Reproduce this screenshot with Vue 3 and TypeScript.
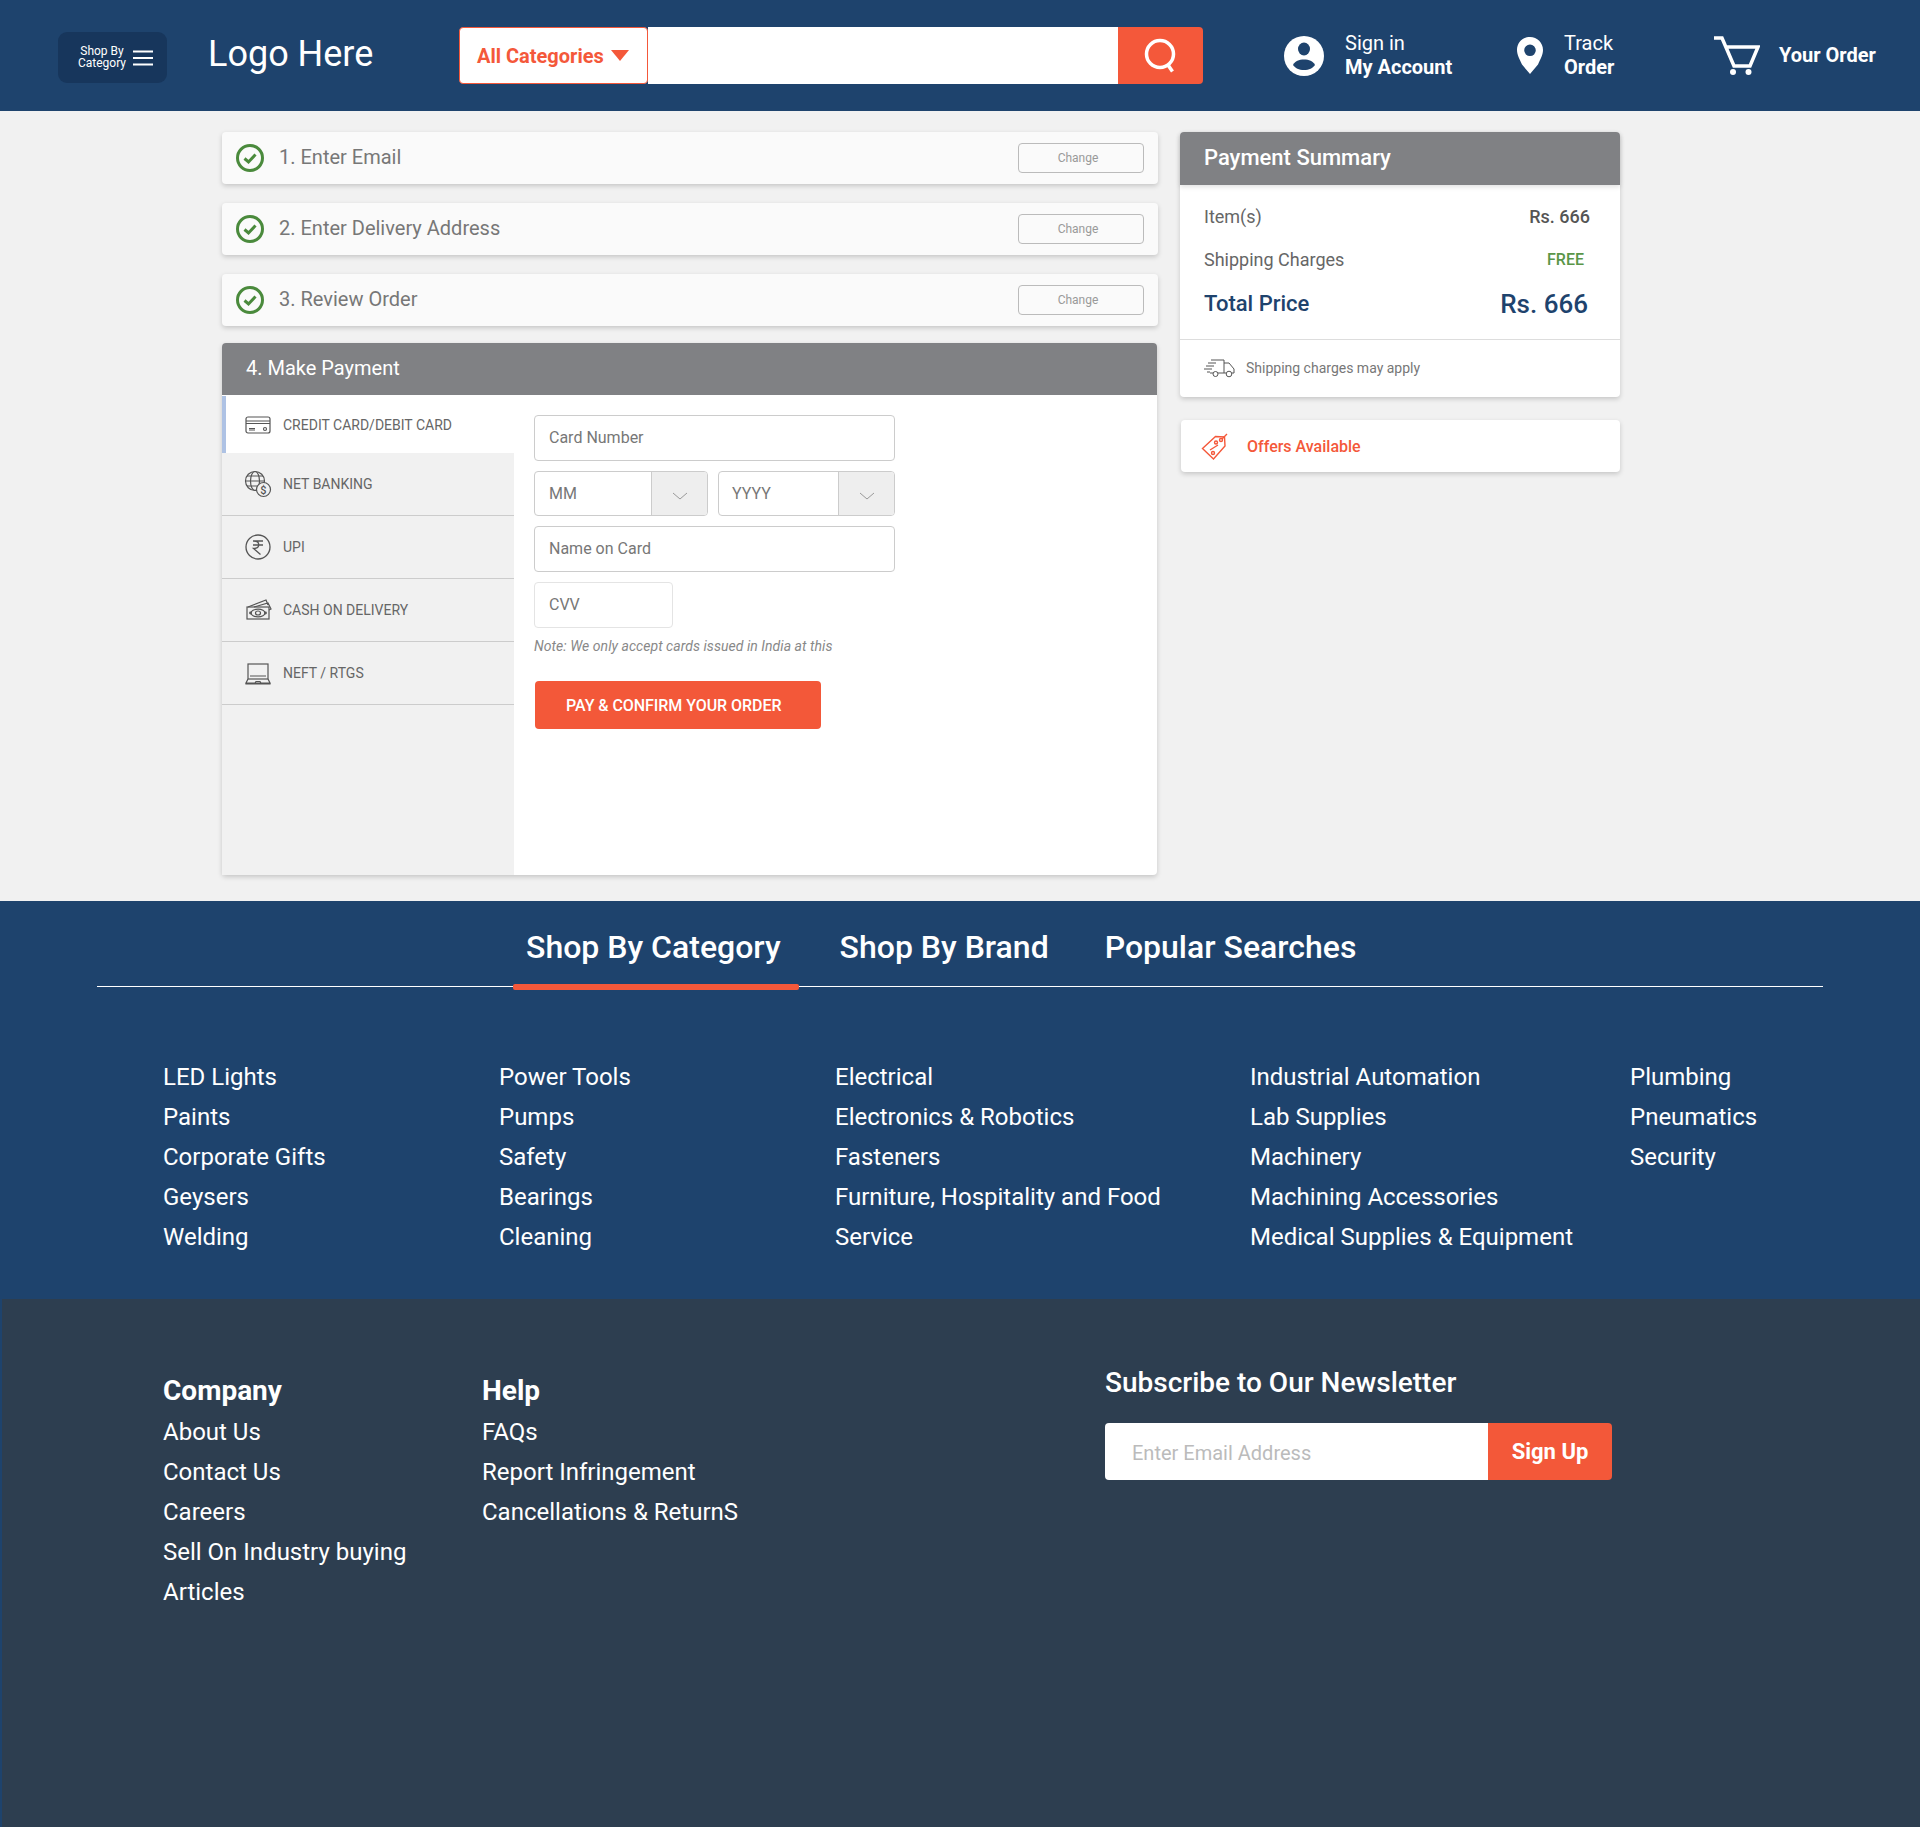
<script setup lang="ts">
const steps = ['1. Enter Email', '2. Enter Delivery Address', '3. Review Order']

const methods = [
  { label: 'CREDIT CARD/DEBIT CARD', icon: 'card', active: true },
  { label: 'NET BANKING', icon: 'globe', active: false },
  { label: 'UPI', icon: 'rupee', active: false },
  { label: 'CASH ON DELIVERY', icon: 'cash', active: false },
  { label: 'NEFT / RTGS', icon: 'laptop', active: false }
]

const tabs = ['Shop By Category', 'Shop By Brand', 'Popular Searches']

const categories = [
  ['LED Lights', 'Paints', 'Corporate Gifts', 'Geysers', 'Welding'],
  ['Power Tools', 'Pumps', 'Safety', 'Bearings', 'Cleaning'],
  ['Electrical', 'Electronics & Robotics', 'Fasteners', 'Furniture, Hospitality and Food Service'],
  ['Industrial Automation', 'Lab Supplies', 'Machinery', 'Machining Accessories', 'Medical Supplies & Equipment'],
  ['Plumbing', 'Pneumatics', 'Security']
]

const company = ['About Us', 'Contact Us', 'Careers', 'Sell On Industry buying', 'Articles']
const help = ['FAQs', 'Report Infringement', 'Cancellations & ReturnS']
</script>

<template>
  <div class="page">
    <header class="topbar">
      <button class="shop-btn">
        <span class="shop-label">Shop By<br />Category</span>
        <svg width="20" height="16" viewBox="0 0 20 16"><path d="M0 1.5h20M0 8h20M0 14.500h20" stroke="#fff" stroke-width="2" /></svg>
      </button>
      <div class="logo">Logo Here</div>
      <div class="search">
        <div class="cat-select">
          All Categories
          <svg width="18" height="11" viewBox="0 0 18 11"><path d="M0 0h18L9 11z" fill="#f4583a" /></svg>
        </div>
        <input class="search-input" type="text" />
        <button class="search-btn">
          <svg width="36" height="36" viewBox="0 0 36 36" fill="none" stroke="#fff" stroke-width="3.500">
            <circle cx="17" cy="16" r="13.500" />
            <path d="M25 27l4.500 6.500" />
          </svg>
        </button>
      </div>
      <div class="nav-item nav-account">
        <svg width="40" height="40" viewBox="0 0 40 40">
          <circle cx="20" cy="20" r="20" fill="#fff" />
          <ellipse cx="20" cy="13" rx="6" ry="6.500" fill="#1e436d" />
          <path d="M9 29c2-4 6-5.500 11-5.500S29 25 31 29c-2 3-6 5-11 5s-9-2-11-5z" fill="#1e436d" />
        </svg>
        <div class="nav-text"><span>Sign in</span><b>My Account</b></div>
      </div>
      <div class="nav-item nav-track">
        <svg width="26" height="37" viewBox="0 0 26 37">
          <path fill="#fff" fill-rule="evenodd" d="M13 0C5.800 0 0 5.700 0 13c0 5 2.500 9 5 14.500L13 37l8-9.500C23.500 22 26 18 26 13 26 5.700 20.200 0 13 0zm0 7.500a5.800 5.800 0 1 1 0 11.600 5.800 5.800 0 0 1 0-11.600z" />
        </svg>
        <div class="nav-text"><span>Track</span><b>Order</b></div>
      </div>
      <div class="nav-item nav-cart">
        <svg width="46" height="40" viewBox="0 0 46 40" fill="none" stroke="#fff" stroke-width="3.500">
          <path d="M0 2h8l12 28h16l8-19H12" />
          <circle cx="19" cy="36" r="3" fill="#fff" stroke="none" />
          <circle cx="34.500" cy="36" r="3" fill="#fff" stroke="none" />
        </svg>
        <b class="cart-text">Your Order</b>
      </div>
    </header>

    <main class="checkout">
      <section class="steps">
        <div v-for="step in steps" :key="step" class="step">
          <svg class="check" width="30" height="30" viewBox="0 0 30 30" fill="none" stroke="#4a8a3c">
            <circle cx="15" cy="15" r="12.500" stroke-width="3" />
            <path d="M9.500 15.500l4 3.500 7-7.500" stroke-width="3" />
          </svg>
          <span class="step-title">{{ step }}</span>
          <button class="change-btn">Change</button>
        </div>

        <div class="payment">
          <div class="payment-head">4. Make Payment</div>
          <div class="payment-body">
            <ul class="methods">
              <li v-for="m in methods" :key="m.label" class="method" :class="{ active: m.active }">
                <svg class="method-icon" width="28" height="28" viewBox="0 0 28 28" fill="none" stroke="#555" stroke-width="1.200">
                  <template v-if="m.icon === 'card'">
                    <rect x="2" y="6" width="24" height="16" rx="2" />
                    <path d="M2 10h24M2 12.500h24M5 17.500h6M5 19h6" />
                    <circle cx="21" cy="18" r="1.500" />
                  </template>
                  <template v-else-if="m.icon === 'globe'">
                    <circle cx="11" cy="11" r="9.500" />
                    <ellipse cx="11" cy="11" rx="4.500" ry="9.500" />
                    <path d="M1.500 11h19M3 6h16M3 16h12" />
                    <circle cx="19.500" cy="19.500" r="7" fill="#f1f1f1" />
                    <text x="19.500" y="23.500" class="dollar">$</text>
                  </template>
                  <template v-else-if="m.icon === 'rupee'">
                    <circle cx="14" cy="14" r="12" stroke-width="1.300" />
                    <path d="M9 8h10M9 12h10M9.500 8c7 0 7 7.500 0 7.500l7 6" stroke-width="1.300" />
                  </template>
                  <template v-else-if="m.icon === 'cash'">
                    <path d="M4 11l18-7 2 5M10 11l14-4 3 6-2 1" />
                    <rect x="3" y="11" width="22" height="12" />
                    <ellipse cx="14" cy="17" rx="7" ry="3.800" />
                    <ellipse cx="14" cy="17" rx="2.500" ry="2" />
                    <circle cx="6.500" cy="17" r="0.800" />
                    <circle cx="21.500" cy="17" r="0.800" />
                  </template>
                  <template v-else>
                    <rect x="4" y="5" width="20" height="15" />
                    <path d="M6 17h16M4 20l-2 4h24l-2-4M2 24v1h24v-1M11 24l1-1.500h4l1 1.500" />
                  </template>
                </svg>
                <span>{{ m.label }}</span>
              </li>
            </ul>
            <form class="card-form" @submit.prevent>
              <input class="field" placeholder="Card Number" />
              <div class="date-row">
                <div class="date-select mm">
                  <span>MM</span>
                  <i class="addon"><svg width="16" height="8" viewBox="0 0 16 8" fill="none" stroke="#999"><path d="M1 1l7 6 7-6" /></svg></i>
                </div>
                <div class="date-select yyyy">
                  <span>YYYY</span>
                  <i class="addon"><svg width="16" height="8" viewBox="0 0 16 8" fill="none" stroke="#999"><path d="M1 1l7 6 7-6" /></svg></i>
                </div>
              </div>
              <input class="field" placeholder="Name on Card" />
              <input class="field cvv" placeholder="CVV" />
              <p class="note">Note: We only accept cards issued in India at this</p>
              <button class="pay-btn">PAY &amp; CONFIRM YOUR ORDER</button>
            </form>
          </div>
        </div>
      </section>

      <aside class="sidebar">
        <div class="summary">
          <h2 class="summary-head">Payment Summary</h2>
          <div class="summary-rows">
            <div class="row"><span>Item(s)</span><b class="amount">Rs. 666</b></div>
            <div class="row"><span>Shipping Charges</span><b class="free">FREE</b></div>
            <div class="row total"><span>Total Price</span><b>Rs. 666</b></div>
          </div>
          <div class="ship-note">
            <svg width="32" height="20" viewBox="0 0 32 20" fill="none" stroke="#555" stroke-width="1">
              <path d="M7 2h13v13H14M9 15H6M20 5h5l5 6v4h-2M22 15h-2" />
              <path d="M4 5h8M2 8h8M0 11h8M3 14h3" />
              <circle cx="11.500" cy="16" r="2.500" />
              <circle cx="25" cy="16" r="2.800" />
            </svg>
            <span>Shipping charges may apply</span>
          </div>
        </div>
        <div class="offers">
          <svg width="28" height="28" viewBox="0 0 28 28" fill="none" stroke="#f4583a" stroke-width="1.400">
            <path d="M1.500 16.500L14.500 4.500l9 .5 .5 9-11.500 13z" />
            <circle cx="20" cy="8" r="1.500" />
            <path d="M21 7l5-5M9 18l8-5" />
            <circle cx="15" cy="10.500" r="1.500" />
            <circle cx="12" cy="21" r="1.500" />
          </svg>
          <span>Offers Available</span>
        </div>
      </aside>
    </main>

    <section class="browse">
      <nav class="tabs">
        <a v-for="(t, i) in tabs" :key="t" class="tab" :class="{ current: i === 0 }">{{ t }}</a>
      </nav>
      <div class="cat-grid">
        <ul v-for="(col, i) in categories" :key="i" class="cat-col">
          <li v-for="c in col" :key="c">{{ c }}</li>
        </ul>
      </div>
    </section>

    <footer class="footer">
      <div class="foot-col company">
        <h3>Company</h3>
        <a v-for="l in company" :key="l">{{ l }}</a>
      </div>
      <div class="foot-col help">
        <h3>Help</h3>
        <a v-for="l in help" :key="l">{{ l }}</a>
      </div>
      <div class="newsletter">
        <h3>Subscribe to Our Newsletter</h3>
        <div class="sub-box">
          <input placeholder="Enter Email Address" />
          <button>Sign Up</button>
        </div>
      </div>
    </footer>
  </div>
</template>

<style>
body {
  margin: 0;
}
</style>

<style scoped>
.page {
  font-family: Roboto, "Liberation Sans", sans-serif;
  background: #1e436d;
  color: #fff;
}

button,
input {
  font-family: inherit;
}

ul {
  list-style: none;
  margin: 0;
  padding: 0;
}

.topbar {
  height: 111px;
  box-sizing: border-box;
  display: flex;
  align-items: center;
  padding-left: 58px;
  background: #1e436d;
}

.shop-btn {
  width: 109px;
  height: 51px;
  margin-top: 4px;
  border: 0;
  border-radius: 9px;
  background: #17365c;
  color: #fff;
  display: flex;
  align-items: center;
  justify-content: center;
  gap: 7px;
  padding: 0 0 0 6px;
}

.shop-label {
  padding-bottom: 2px;
  font-size: 12px;
  line-height: 12px;
  text-align: center;
}

.logo {
  width: 292px;
  box-sizing: border-box;
  padding: 0 0 3px 41px;
  font-size: 36px;
}

.search {
  width: 744px;
  height: 57px;
  display: flex;
}

.cat-select {
  width: 189px;
  box-sizing: border-box;
  border: 1px solid #f4583a;
  border-radius: 4px;
  background: #fff;
  color: #f4583a;
  font-size: 20px;
  font-weight: 700;
  display: flex;
  align-items: center;
  gap: 7px;
  padding-left: 17px;
}

.search-input {
  flex: 1;
  min-width: 0;
  border: 0;
  padding: 0;
  background: #fff;
}

.search-btn {
  width: 85px;
  border: 0;
  padding: 0;
  border-radius: 0 4px 4px 0;
  background: #f4583a;
  display: flex;
  align-items: center;
  justify-content: center;
}

.nav-item {
  display: flex;
  align-items: center;
}

.nav-account {
  width: 233px;
  margin-left: 81px;
  gap: 21px;
}

.nav-track {
  width: 197px;
  gap: 21px;
}

.nav-cart {
  gap: 19px;
}

.nav-text {
  display: flex;
  flex-direction: column;
  font-size: 20px;
  line-height: 24px;
  padding-bottom: 2px;
}

.nav-text b,
.cart-text {
  font-weight: 700;
  font-size: 20px;
}

.cart-text {
  padding-bottom: 2px;
}

.checkout {
  height: 790px;
  box-sizing: border-box;
  padding: 21px 0 0 222px;
  display: flex;
  gap: 22px;
  background: #f1f1f1;
  color: #666;
}

.steps {
  width: 936px;
  display: flex;
  flex-direction: column;
  gap: 19px;
}

.step {
  height: 52px;
  box-sizing: border-box;
  display: flex;
  align-items: center;
  padding: 0 14px 0 13px;
  border-radius: 4px;
  background: #fafafa;
  box-shadow: 0 2px 5px rgba(0, 0, 0, 0.18);
}

.check {
  margin-right: 14px;
}

.step-title {
  flex: 1;
  padding-bottom: 2px;
  font-size: 20px;
  color: #777;
}

.change-btn {
  width: 126px;
  height: 30px;
  border: 1px solid #bbb;
  border-radius: 4px;
  padding: 0 6px 0 0;
  background: transparent;
  color: #999;
  font-size: 12px;
}

.payment {
  width: 935px;
  height: 532px;
  margin-top: -2px;
  display: flex;
  flex-direction: column;
  border-radius: 4px;
  background: #fff;
  box-shadow: 0 2px 5px rgba(0, 0, 0, 0.18);
}

.payment-head {
  height: 52px;
  line-height: 51px;
  padding-left: 24px;
  flex: none;
  background: #808184;
  border-radius: 4px 4px 0 0;
  color: #fff;
  font-size: 20px;
}

.payment-body {
  flex: 1;
  display: flex;
  padding-top: 1px;
  min-height: 0;
}

.methods {
  width: 292px;
  flex: none;
  background: #f1f1f1;
}

.method {
  height: 63px;
  box-sizing: border-box;
  display: flex;
  align-items: center;
  gap: 11px;
  padding-left: 22px;
  border-bottom: 1px solid #ccc;
  font-size: 14px;
  color: #666;
}

.method.active {
  height: 57px;
  padding-left: 18px;
  border-bottom: 0;
  border-left: 4px solid #aec2e4;
  background: #fff;
}

.dollar {
  font-family: Roboto, sans-serif;
  font-size: 11px;
  font-weight: 500;
  fill: #555;
  stroke: none;
  text-anchor: middle;
}

.card-form {
  width: 361px;
  margin-left: 20px;
  padding-top: 19px;
  display: flex;
  flex-direction: column;
  gap: 10px;
}

.field {
  height: 46px;
  box-sizing: border-box;
  border: 1px solid #ccc;
  border-radius: 4px;
  padding: 0 14px 2px;
  font-size: 16px;
  background: #fff;
}

.field::placeholder {
  color: #777;
  opacity: 1;
}

.cvv {
  width: 139px;
  border-color: #e4e4e4;
}

.date-row {
  height: 45px;
  display: flex;
  justify-content: space-between;
}

.date-select {
  box-sizing: border-box;
  border: 1px solid #ccc;
  border-radius: 4px;
  display: flex;
  align-items: center;
  overflow: hidden;
  font-size: 16px;
  color: #777;
}

.date-select span {
  flex: 1;
  padding-left: 14px;
}

.mm {
  width: 174px;
}

.yyyy {
  width: 177px;
}

.yyyy span {
  padding-left: 13px;
}

.addon {
  width: 56px;
  height: 100%;
  border-left: 1px solid #ccc;
  background: #eee;
  display: flex;
  align-items: center;
  justify-content: center;
  padding-top: 4px;
  box-sizing: border-box;
}

.note {
  margin: 0;
  font-size: 14px;
  line-height: 16px;
  letter-spacing: 0.05px;
  font-style: italic;
  color: #888;
}

.pay-btn {
  width: 286px;
  height: 48px;
  margin: 17px 0 0 1px;
  border: 0;
  border-radius: 4px;
  background: #f35839;
  color: #fff;
  font-size: 16px;
  font-weight: 500;
  letter-spacing: -0.05px;
  text-align: left;
  padding-left: 31px;
}

.sidebar {
  width: 440px;
}

.summary {
  height: 265px;
  border-radius: 4px;
  background: #fff;
  box-shadow: 0 2px 5px rgba(0, 0, 0, 0.18);
}

.summary-head {
  margin: 0;
  height: 53px;
  line-height: 52px;
  padding-left: 24px;
  background: #808184;
  border-radius: 4px 4px 0 0;
  box-shadow: 0 2px 5px rgba(0, 0, 0, 0.12);
  color: #fff;
  font-size: 22px;
  font-weight: 500;
}

.summary-rows {
  height: 155px;
  box-sizing: border-box;
  padding: 10px 30px 0 24px;
  border-bottom: 1px solid #ddd;
}

.row {
  height: 43px;
  display: flex;
  align-items: center;
  justify-content: space-between;
  font-size: 18px;
}

.amount {
  font-weight: 500;
  color: #555;
}

.free {
  font-size: 16px;
  font-weight: 500;
  color: #5a9648;
  margin-right: 6px;
}

.total {
  height: 45px;
  color: #1e436d;
  font-size: 22px;
  font-weight: 500;
  padding-right: 2px;
}

.total b {
  font-size: 26px;
  font-weight: 500;
}

.ship-note {
  height: 56px;
  display: flex;
  align-items: center;
  gap: 10px;
  padding-left: 24px;
  font-size: 14px;
  color: #777;
}

.offers {
  height: 52px;
  margin: 23px 0 0 1px;
  display: flex;
  align-items: center;
  gap: 18px;
  padding-left: 20px;
  border-radius: 4px;
  background: #fff;
  box-shadow: 0 2px 5px rgba(0, 0, 0, 0.18);
  color: #f4583a;
  font-size: 16px;
  font-weight: 500;
}

.browse {
  height: 398px;
  box-sizing: border-box;
}

.tabs {
  height: 86px;
  box-sizing: border-box;
  margin: 0 97px;
  padding-left: 416px;
  display: flex;
  gap: 28px;
  border-bottom: 1px solid #fff;
}

.tab {
  position: relative;
  padding: 26px 13px 0;
  font-size: 32px;
  line-height: 40px;
  font-weight: 500;
}

.tab.current {
  padding-right: 18px;
}

.tab:last-child {
  margin-left: 2px;
}

.tab.current::after {
  content: "";
  position: absolute;
  left: 0;
  right: 0;
  bottom: -4px;
  height: 6px;
  border-radius: 2px;
  background: #f4583a;
}

.cat-grid {
  display: grid;
  grid-template-columns: 336px 336px 415px 380px 1fr;
  padding: 70px 0 0 163px;
  font-size: 24px;
  line-height: 40px;
}

.cat-col li {
  max-width: 340px;
}

.footer {
  height: 528px;
  box-sizing: border-box;
  margin-left: 2px;
  padding: 63px 0 0 161px;
  display: flex;
  background: #2d3e50;
}

.foot-col {
  display: flex;
  flex-direction: column;
  padding-top: 8px;
  font-size: 24px;
  line-height: 40px;
}

.foot-col h3 {
  margin: 0;
  font-size: 28px;
  line-height: 42px;
  font-weight: 700;
}

.company {
  width: 319px;
}

.help {
  width: 623px;
}

.newsletter {
  padding-top: 1px;
}

.newsletter h3 {
  margin: 0 0 20px;
  font-size: 28px;
  line-height: 40px;
  font-weight: 500;
}

.sub-box {
  width: 507px;
  height: 57px;
  display: flex;
}

.sub-box input {
  flex: 1;
  min-width: 0;
  border: 0;
  padding: 2px 0 0 27px;
  border-radius: 4px 0 0 4px;
  background: #fff;
  font-size: 20px;
}

.sub-box input::placeholder {
  color: #bbb;
  opacity: 1;
}

.sub-box button {
  width: 124px;
  border: 0;
  padding: 0;
  border-radius: 0 4px 4px 0;
  background: #f35839;
  color: #fff;
  font-size: 22px;
  font-weight: 700;
}
</style>
